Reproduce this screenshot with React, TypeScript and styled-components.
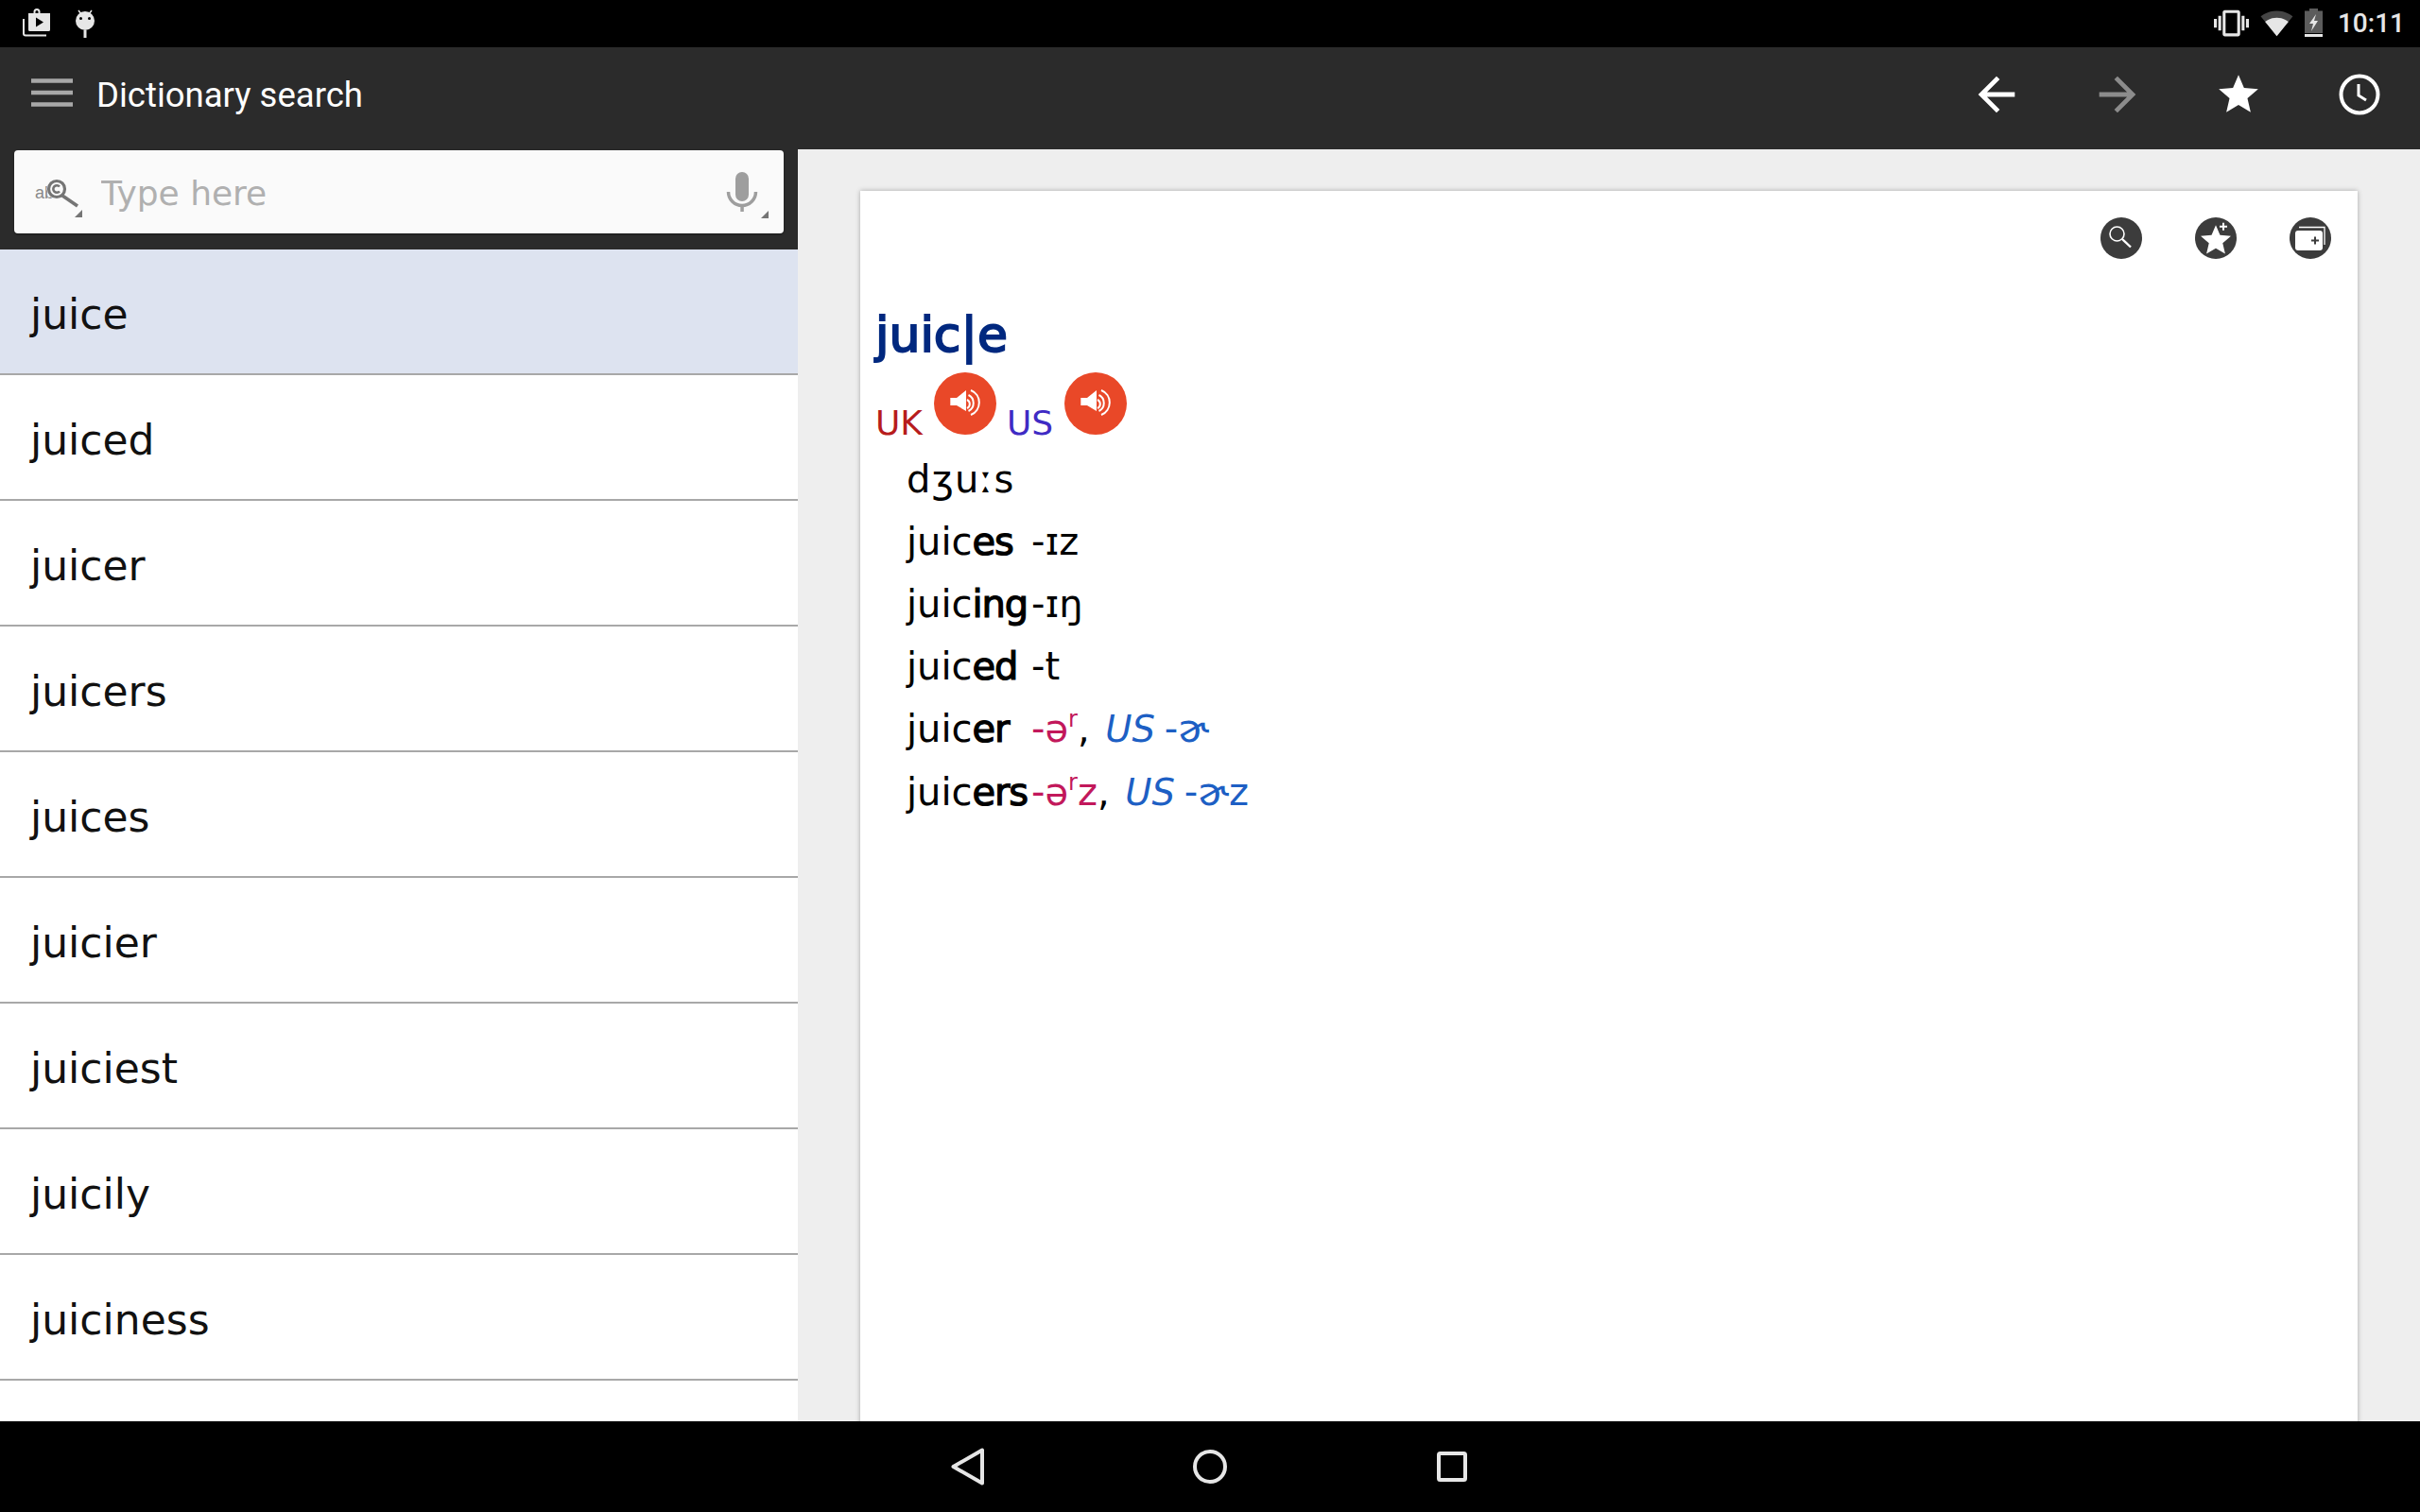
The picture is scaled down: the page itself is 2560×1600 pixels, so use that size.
import {type FC} from "react";
import styled, {createGlobalStyle} from "styled-components";

const WORDS = ["juice", "juiced", "juicer", "juicers", "juices", "juicier", "juiciest", "juicily", "juiciness"];

const App: FC = () => {
    return (
        <Screen>
            <GlobalStyle/>
            <StatusBar>
                <LeftStatus>
                    <svg width="30" height="30" viewBox="0 0 30 30">
                        <path d="M6 5h5.500V3.500a3.500 3.500 0 0 1 7 0V5H29v17.500a1.500 1.500 0 0 1-1.500 1.500H7.500A1.500 1.500 0 0 1 6 22.500z" fill="#e6e6e6"/>
                        <path d="M13.500 5V3.500a1.500 1.500 0 0 1 3 0V5z" fill="#000"/>
                        <path d="M14 9.500v10l8-5z" fill="#000"/>
                        <path d="M1 11v15.500a2 2 0 0 0 2 2h22" fill="none" stroke="#e6e6e6" strokeWidth="2"/>
                    </svg>
                    <svg width="24" height="32" viewBox="0 0 24 32">
                        <path d="M5 3l3 4M19 3l-3 4" stroke="#e6e6e6" strokeWidth="1.500"/>
                        <circle cx="12" cy="14" r="10" fill="#e6e6e6"/>
                        <circle cx="7.500" cy="11.500" r="1.500" fill="#000"/>
                        <circle cx="16.500" cy="11.500" r="1.500" fill="#000"/>
                        <rect x="10.500" y="24" width="3" height="8" fill="#e6e6e6"/>
                    </svg>
                </LeftStatus>
                <RightStatus>
                    <StatusSlot $w={37}>
                        <svg width="37" height="37" viewBox="0 0 24 24">
                            <path fill="#e6e6e6" d="M0 15h2V9H0v6zm3 2h2V7H3v10zm19-8v6h2V9h-2zm-3 8h2V7h-2v10zM16.500 3h-9C6.670 3 6 3.670 6 4.500v15c0 .830.670 1.500 1.500 1.500h9c.830 0 1.500-.670 1.500-1.500v-15c0-.830-.670-1.500-1.500-1.500zM16 19H8V5h8v14z"/>
                        </svg>
                    </StatusSlot>
                    <StatusSlot $w={35}>
                        <svg width="35" height="35" viewBox="0 0 24 24">
                            <path fill="#e6e6e6" fillOpacity=".3" d="M12.010 21.490L23.640 7c-.450-.340-4.930-4-11.640-4C5.280 3 .810 6.660.360 7l11.630 14.490.010.010.010-.010z"/>
                            <path fill="#e6e6e6" d="M3.530 10.950l8.460 10.540.010.010.010-.010 8.460-10.540C20.040 10.620 16.810 8 12 8c-4.810 0-8.040 2.620-8.470 2.950z"/>
                        </svg>
                    </StatusSlot>
                    <StatusSlot $w={19}>
                        <svg width="19" height="30" viewBox="0 0 19 30">
                            <path fill="#5c5c5c" d="M5 0h9v2.500h5V26H0V2.500h5z"/>
                            <path fill="#e6e6e6" d="M0 27h19v3H0z"/>
                            <path fill="#e6e6e6" d="M12 6L5 16h4l-2 8 7-11h-4z"/>
                        </svg>
                    </StatusSlot>
                    <Clock>10:11</Clock>
                </RightStatus>
            </StatusBar>

            <Toolbar>
                <MenuButton>
                    <svg width="44" height="30" viewBox="0 0 44 30">
                        <path d="M0 2.500h44M0 15h44M0 27.500h44" stroke="#a8a8a8" strokeWidth="4.500"/>
                    </svg>
                </MenuButton>
                <ToolbarTitle>Dictionary search</ToolbarTitle>
                <ToolbarActions>
                    <ActionButton>
                        <svg width="58" height="58" viewBox="0 0 24 24">
                            <path fill="#fff" d="M20 11H7.830l5.590-5.590L12 4l-8 8 8 8 1.410-1.410L7.830 13H20v-2z"/>
                        </svg>
                    </ActionButton>
                    <ActionButton>
                        <svg width="58" height="58" viewBox="0 0 24 24">
                            <path fill="#8c8c8c" d="M12 4l-1.410 1.410L16.170 11H4v2h12.170l-5.580 5.590L12 20l8-8z"/>
                        </svg>
                    </ActionButton>
                    <ActionButton>
                        <svg width="50" height="50" viewBox="0 0 24 24">
                            <path fill="#fff" d="M12 17.270L18.180 21l-1.640-7.030L22 9.240l-7.190-.610L12 2 9.190 8.630 2 9.240l5.460 4.730L5.820 21z"/>
                        </svg>
                    </ActionButton>
                    <ActionButton>
                        <svg width="44" height="44" viewBox="0 0 44 44">
                            <circle cx="22" cy="22" r="19.500" fill="none" stroke="#fff" strokeWidth="4"/>
                            <path d="M21 11v12l8 5" fill="none" stroke="#fff" strokeWidth="3"/>
                        </svg>
                    </ActionButton>
                </ToolbarActions>
            </Toolbar>

            <Body>
                <Sidebar>
                    <SearchArea>
                        <SearchBox>
                            <SearchMode>
                                <svg width="66" height="50" viewBox="0 0 66 50">
                                    <text x="0" y="26" fontFamily="'Liberation Sans', sans-serif" fontSize="18" fill="#8a8a8a">ab</text>
                                    <circle cx="23" cy="16" r="10.500" fill="#fafafa"/>
                                    <circle cx="23" cy="16" r="8.500" fill="none" stroke="#757575" strokeWidth="3.200"/>
                                    <path d="M26 13.500a3.800 3.800 0 1 0 0 5" fill="none" stroke="#757575" strokeWidth="2.600"/>
                                    <path d="M29 23l16 11" stroke="#757575" strokeWidth="3.500"/>
                                    <path d="M50 38v8h-8z" fill="#757575"/>
                                </svg>
                            </SearchMode>
                            <SearchInput placeholder="Type here" readOnly/>
                            <MicButton>
                                <svg width="46" height="50" viewBox="0 0 46 50">
                                    <rect x="10" y="0" width="14" height="31" rx="7" fill="#9e9e9e"/>
                                    <path d="M2.500 21a14.500 14.500 0 0 0 29 0" fill="none" stroke="#9e9e9e" strokeWidth="3.500"/>
                                    <rect x="15.300" y="34" width="3.500" height="8" fill="#9e9e9e"/>
                                    <path d="M45 41v8h-8z" fill="#757575"/>
                                </svg>
                            </MicButton>
                        </SearchBox>
                    </SearchArea>
                    <WordList>
                        {WORDS.map((word, i) => (
                            <WordRow key={word} $active={i === 0}>{word}</WordRow>
                        ))}
                    </WordList>
                </Sidebar>

                <Main>
                    <Card>
                        <CardTools>
                            <RoundTool>
                                <svg width="44" height="44" viewBox="0 0 44 44">
                                    <circle cx="17.500" cy="17.500" r="7.500" fill="none" stroke="#fff" strokeWidth="1.600"/>
                                    <path d="M23 23l9 8.500" stroke="#fff" strokeWidth="2.400"/>
                                </svg>
                            </RoundTool>
                            <RoundTool>
                                <svg width="44" height="44" viewBox="0 0 44 44">
                                    <path fill="#fff" transform="translate(2.800 5) scale(1.600)" d="M12 17.270L18.180 21l-1.640-7.030L22 9.240l-7.190-.610L12 2 9.190 8.630 2 9.240l5.460 4.730L5.820 21z"/>
                                    <path d="M26 9.700h8M30 5.700v8" stroke="#fff" strokeWidth="2"/>
                                </svg>
                            </RoundTool>
                            <RoundTool>
                                <svg width="44" height="44" viewBox="0 0 44 44">
                                    <path d="M10 10.500h27V29" fill="none" stroke="#fff" strokeWidth="1.300"/>
                                    <rect x="6" y="14" width="29" height="21" rx="3" fill="#fff"/>
                                    <path d="M23 24.500h8M27 20.500v8" stroke="#3c3c3c" strokeWidth="2"/>
                                </svg>
                            </RoundTool>
                        </CardTools>

                        <Headword>juic|e</Headword>

                        <AudioRow>
                            <AudioLabel $color="#b71c1c">UK</AudioLabel>
                            <SpeakerIcon/>
                            <AudioLabel $color="#3f2bc4">US</AudioLabel>
                            <SpeakerIcon/>
                        </AudioRow>

                        <Entries>
                            <Phonetic>dʒuːs</Phonetic>
                            <EntryLine><Form>juic<b>es</b></Form>-ɪz</EntryLine>
                            <EntryLine><Form>juic<b>ing</b></Form>-ɪŋ</EntryLine>
                            <EntryLine><Form>juic<b>ed</b></Form>-t</EntryLine>
                            <EntryLine>
                                <Form>juic<b>er</b></Form>
                                <Uk>-ə<sup>r</sup></Uk>, <Us><i>US</i> -ɚ</Us>
                            </EntryLine>
                            <EntryLine>
                                <Form>juic<b>ers</b></Form>
                                <Uk>-ə<sup>r</sup>z</Uk>, <Us><i>US</i> -ɚz</Us>
                            </EntryLine>
                        </Entries>
                    </Card>
                </Main>
            </Body>

            <NavBar>
                <NavSlot>
                    <svg width="36" height="40" viewBox="0 0 36 40">
                        <path d="M2.500 20L33 2.500v35z" fill="none" stroke="#e6e6e6" strokeWidth="4" strokeLinejoin="round"/>
                    </svg>
                </NavSlot>
                <NavSlot>
                    <svg width="36" height="38" viewBox="0 0 36 38">
                        <circle cx="18" cy="19" r="16" fill="none" stroke="#e6e6e6" strokeWidth="4"/>
                    </svg>
                </NavSlot>
                <NavSlot>
                    <svg width="32" height="32" viewBox="0 0 32 32">
                        <rect x="2" y="2" width="28" height="28" rx="1.500" fill="none" stroke="#e6e6e6" strokeWidth="4"/>
                    </svg>
                </NavSlot>
            </NavBar>
        </Screen>
    );
};

const SpeakerIcon: FC = () => (
    <SpeakerButton>
        <svg width="36" height="36" viewBox="0 0 36 36">
            <path fill="#fff" d="M2.300 12H9l10-8v22L9 20H2.300z"/>
            <path d="M24 4a14 14 0 0 1 0 26M21.500 9a9.500 9.500 0 0 1 0 17M20 14a5 5 0 0 1 0 9" fill="none" stroke="#fff" strokeWidth="2"/>
        </svg>
    </SpeakerButton>
);

export default App;

const GlobalStyle = createGlobalStyle`
    html, body {
        margin: 0;
        padding: 0;
        background: #000;
    }

    * {
        box-sizing: border-box;
    }
`;

const Screen = styled.div`
    width: 2560px;
    height: 1600px;

    display: flex;
    flex-direction: column;

    overflow: hidden;

    font-family: "DejaVu Sans", sans-serif;
`;

const StatusBar = styled.div`
    height: 50px;
    flex: none;

    display: flex;
    align-items: center;
    justify-content: space-between;

    padding: 0 16px 2px 24px;

    background: #000;
`;

const LeftStatus = styled.div`
    display: flex;
    align-items: center;
    gap: 24px;
`;

const RightStatus = styled.div`
    display: flex;
    align-items: center;
`;

const StatusSlot = styled.div<{ $w: number }>`
    width: ${p => p.$w}px;
    margin-right: 12px;

    display: flex;
    align-items: center;
    justify-content: center;
`;

const Clock = styled.div`
    margin-left: 4px;

    font-family: Roboto, sans-serif;
    font-size: 28px;
    font-weight: 500;

    color: #e6e6e6;
`;

const Toolbar = styled.div`
    height: 108px;
    flex: none;

    display: flex;
    align-items: center;

    padding: 0 0 8px 33px;

    background: #2b2b2b;
`;

const MenuButton = styled.div`
    display: flex;

    margin: 0 25px 4px 0;
`;

const ToolbarTitle = styled.div`
    flex: 1;

    font-family: Roboto, sans-serif;
    font-size: 36.5px;

    color: #fff;
`;

const ToolbarActions = styled.div`
    display: flex;
`;

const ActionButton = styled.div`
    width: 128px;
    height: 100px;

    display: flex;
    align-items: center;
    justify-content: center;
`;

const Body = styled.div`
    flex: 1;
    min-height: 0;

    display: flex;
`;

const Sidebar = styled.div`
    width: 844px;
    flex: none;

    display: flex;
    flex-direction: column;

    background: #fff;
`;

const SearchArea = styled.div`
    height: 106px;
    flex: none;

    padding: 1px 15px 17px;

    background: #2b2b2b;
`;

const SearchBox = styled.div`
    height: 88px;

    display: flex;
    align-items: center;

    border-radius: 4px;

    background: #fafafa;

    box-shadow: 0 1px 2px rgba(0, 0, 0, 0.5);
`;

const SearchMode = styled.div`
    width: 92px;
    height: 50px;
    flex: none;

    display: flex;

    padding-left: 22px;
    margin-top: 12px;
`;

const SearchInput = styled.input`
    flex: 1;
    min-width: 0;
    height: 60px;

    margin-top: 2px;
    padding: 0;

    border: none;
    outline: none;
    background: transparent;

    font-family: "DejaVu Sans", sans-serif;
    font-size: 36px;

    color: #333;

    &::placeholder {
        color: #b0b0b0;
        opacity: 1;
    }
`;

const MicButton = styled.div`
    width: 61px;
    height: 50px;
    flex: none;

    display: flex;

    margin-top: 8px;
`;

const WordList = styled.div`
    flex: 1;
    min-height: 0;

    overflow: hidden;
`;

const WordRow = styled.div<{ $active?: boolean }>`
    height: 133px;

    display: flex;
    align-items: center;

    padding: 5px 0 0 32px;

    border-bottom: 2px solid #a8a8a8;

    background: ${p => (p.$active ? "#dde3f0" : "#fff")};

    font-size: 44px;

    color: #111;
`;

const Main = styled.div`
    flex: 1;
    min-width: 0;

    padding: 44px 66px 0;

    overflow: hidden;

    background: #eee;
`;

const Card = styled.div`
    height: 1400px;

    padding: 28px 28px 0 16px;

    background: #fff;

    box-shadow: 0 0 5px rgba(0, 0, 0, 0.3);
`;

const CardTools = styled.div`
    display: flex;
    justify-content: flex-end;
    gap: 56px;

    margin-bottom: 36px;
`;

const RoundTool = styled.div`
    width: 44px;
    height: 44px;

    display: flex;

    border-radius: 50%;

    background: #3c3c3c;
`;

const Headword = styled.div`
    height: 84px;

    font-size: 52px;
    line-height: 88px;

    -webkit-text-stroke: 2px currentColor;

    color: #00287f;
`;

const AudioRow = styled.div`
    display: flex;
    align-items: flex-start;

    height: 80px;
`;

const AudioLabel = styled.div<{ $color: string }>`
    margin: 32px 12px 0 0;

    font-size: 36px;
    line-height: 44px;

    color: ${p => p.$color};
`;

const SpeakerButton = styled.div`
    width: 66px;
    height: 66px;

    display: flex;
    align-items: center;
    justify-content: center;

    margin-right: 11px;

    border-radius: 50%;

    background: #e94828;
`;

const Entries = styled.div`
    padding-left: 33px;

    font-size: 40px;
    line-height: 66px;

    color: #000;

    b {
        font-weight: 400;
        letter-spacing: -1.2px;
        -webkit-text-stroke: 1.2px currentColor;
    }
`;

const EntryLine = styled.div`
    white-space: nowrap;
`;

const Phonetic = styled(EntryLine)`
    letter-spacing: 1.3px;
`;

const Form = styled.span`
    display: inline-block;

    width: 132px;
`;

const Uk = styled.span`
    color: #c2185b;

    sup {
        font-size: 24px;
        line-height: 0;
        vertical-align: 16px;
    }
`;

const Us = styled.span`
    margin-left: 4px;

    color: #1d5fc4;

    i {
        margin-right: -3px;

        font-size: 38.5px;
        font-style: italic;
    }
`;

const NavBar = styled.div`
    height: 96px;
    flex: none;

    display: flex;
    align-items: center;
    justify-content: center;
    gap: 64px;

    background: #000;
`;

const NavSlot = styled.div`
    width: 192px;

    display: flex;
    justify-content: center;
`;
